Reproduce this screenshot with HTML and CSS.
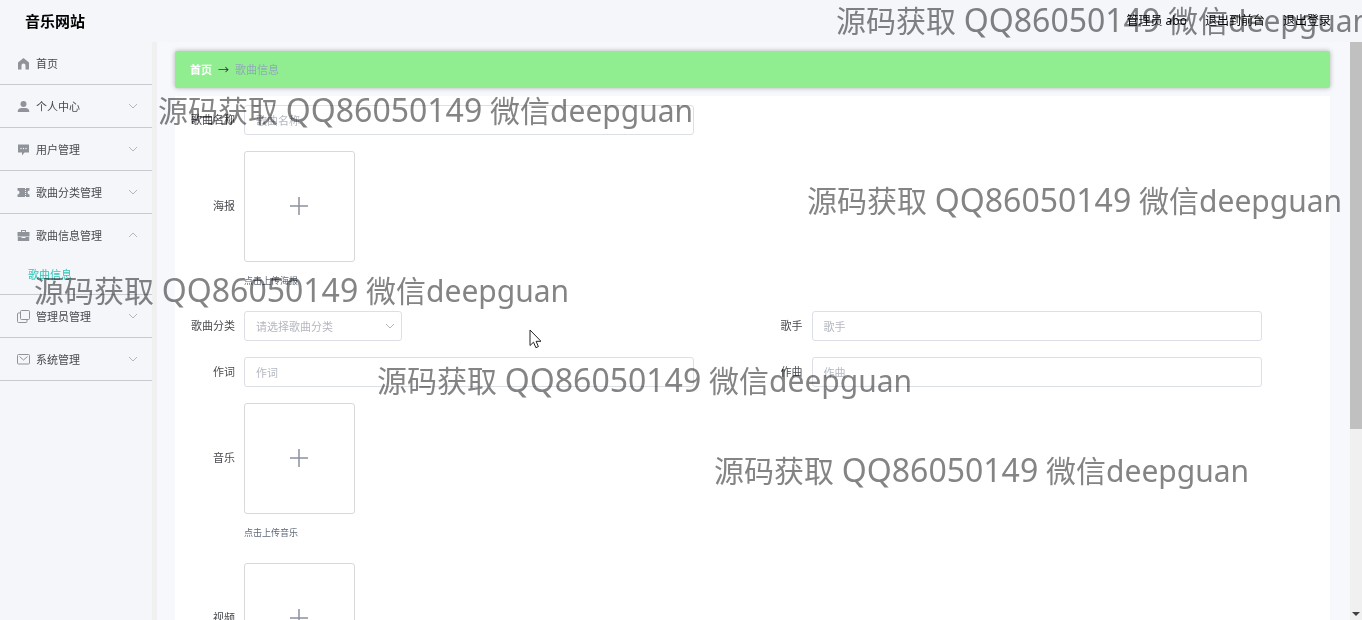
FILE: index.html
```html
<!DOCTYPE html>
<html lang="zh-CN">
<head>
  <meta charset="UTF-8">
  <meta name="viewport" content="width=device-width, initial-scale=1.0">
  <title>音乐网站</title>
  <link rel="stylesheet" href="styles.css">
</head>
<body>
  <header class="navbar">
    <h1>音乐网站</h1>
    <nav class="user-links">
      <span>管理员 abo</span>
      <a href="#">退出到前台</a>
      <a href="#">退出登录</a>
    </nav>
  </header>

  <div class="layout">
    <!-- Side menu -->
    <aside class="sidebar">
      <ul class="menu">
        <li>
          <a class="menu-item" href="#">
            <svg class="icon" viewBox="0 0 13 13"><path fill="currentColor" d="M6.500 1 12 5.500V12.500H8.500V8.500a2 2 0 0 0-4 0v4H1v-7z"/></svg>
            <span>首页</span>
          </a>
        </li>
        <li>
          <a class="menu-item" href="#">
            <svg class="icon" viewBox="0 0 13 13"><circle fill="currentColor" cx="6.500" cy="4" r="3"/><path fill="currentColor" d="M.7 12c0-3 1.500-4 4-4h3.600c2.500 0 4 1 4 4z"/></svg>
            <span>个人中心</span>
            <svg class="arrow" viewBox="0 0 10 10"><path d="M1 3l4 4 4-4"/></svg>
          </a>
        </li>
        <li>
          <a class="menu-item" href="#">
            <svg class="icon" viewBox="0 0 13 13"><path fill="currentColor" d="M1 1.500h11v8H7.500L5 12.500v-3H1z"/><g fill="#f5f7fa"><circle cx="4" cy="5.500" r=".7"/><circle cx="6.500" cy="5.500" r=".7"/><circle cx="9" cy="5.500" r=".7"/></g></svg>
            <span>用户管理</span>
            <svg class="arrow" viewBox="0 0 10 10"><path d="M1 3l4 4 4-4"/></svg>
          </a>
        </li>
        <li>
          <a class="menu-item" href="#">
            <svg class="icon" viewBox="0 0 13 13"><path fill="currentColor" d="M.5 2h12v2.500a2 2 0 0 0 0 4V11H.5V8.500a2 2 0 0 0 0-4z"/><path stroke="#f5f7fa" stroke-dasharray="1 1" d="M8.500 2v9"/></svg>
            <span>歌曲分类管理</span>
            <svg class="arrow" viewBox="0 0 10 10"><path d="M1 3l4 4 4-4"/></svg>
          </a>
        </li>
        <li>
          <a class="menu-item" href="#">
            <svg class="icon" viewBox="0 0 13 13"><path fill="currentColor" fill-rule="evenodd" d="M4 3V1h5v2h3.500v4.500H.5V3zM5 3h3V2H5zM.8 8h3.700v1h4V8h3.700v4H.8z"/></svg>
            <span>歌曲信息管理</span>
            <svg class="arrow" viewBox="0 0 10 10"><path d="M1 7l4-4 4 4"/></svg>
          </a>
          <a class="submenu-item" href="#">歌曲信息</a>
        </li>
        <li>
          <a class="menu-item" href="#">
            <svg class="icon" viewBox="0 0 13 13"><g fill="none" stroke="currentColor"><rect x="3.500" y=".5" width="9" height="9" rx="1"/><path d="M3.500 3H1.500a1 1 0 0 0-1 1v7.500a1 1 0 0 0 1 1H9a1 1 0 0 0 1-1v-2"/></g></svg>
            <span>管理员管理</span>
            <svg class="arrow" viewBox="0 0 10 10"><path d="M1 3l4 4 4-4"/></svg>
          </a>
        </li>
        <li>
          <a class="menu-item" href="#">
            <svg class="icon" viewBox="0 0 13 13"><g fill="none" stroke="currentColor"><rect x=".5" y="1.500" width="12" height="9.500" rx="1"/><path d="M2.500 3.500l4 3.500 4-3.500"/></g></svg>
            <span>系统管理</span>
            <svg class="arrow" viewBox="0 0 10 10"><path d="M1 3l4 4 4-4"/></svg>
          </a>
        </li>
      </ul>
    </aside>

    <main class="content">
      <div class="breadcrumb">
        <a href="#">首页</a>
        <span class="separator">→</span>
        <span class="current">歌曲信息</span>
      </div>

      <!-- Song form -->
      <form class="song-form">
        <div class="field wide">
          <label for="name">歌曲名称</label>
          <input type="text" id="name" placeholder="歌曲名称">
        </div>
        <div class="field wide">
          <label class="upload-label" for="poster">海报</label>
          <div class="upload">
            <button type="button" id="poster"><svg viewBox="0 0 18 18"><path d="M9 0v18M0 9h18"/></svg></button>
            <p>点击上传海报</p>
          </div>
        </div>
        <div class="field">
          <label for="category">歌曲分类</label>
          <div class="select">
            <select id="category">
              <option>请选择歌曲分类</option>
            </select>
            <svg class="arrow" viewBox="0 0 10 10"><path d="M1 3l4 4 4-4"/></svg>
          </div>
        </div>
        <div class="field">
          <label for="singer">歌手</label>
          <input type="text" id="singer" placeholder="歌手">
        </div>
        <div class="field">
          <label for="lyricist">作词</label>
          <input type="text" id="lyricist" placeholder="作词">
        </div>
        <div class="field">
          <label for="composer">作曲</label>
          <input type="text" id="composer" placeholder="作曲">
        </div>
        <div class="field wide">
          <label class="upload-label" for="music">音乐</label>
          <div class="upload">
            <button type="button" id="music"><svg viewBox="0 0 18 18"><path d="M9 0v18M0 9h18"/></svg></button>
            <p>点击上传音乐</p>
          </div>
        </div>
        <div class="field wide">
          <label class="upload-label" for="video">视频</label>
          <div class="upload">
            <button type="button" id="video"><svg viewBox="0 0 18 18"><path d="M9 0v18M0 9h18"/></svg></button>
          </div>
        </div>
      </form>
    </main>

    <div class="scrollbar">
      <div class="thumb"></div>
      <svg viewBox="0 0 12 12"><path d="M2 4h8L6 8z"/></svg>
    </div>
  </div>

  <!-- Watermarks -->
  <div class="watermark mark-1">源码获取 <span>QQ86050149</span> 微信deepguan</div>
  <div class="watermark mark-2">源码获取 <span>QQ86050149</span> 微信deepguan</div>
  <div class="watermark mark-3">源码获取 <span>QQ86050149</span> 微信deepguan</div>
  <div class="watermark mark-4">源码获取 <span>QQ86050149</span> 微信deepguan</div>
  <div class="watermark mark-5">源码获取 <span>QQ86050149</span> 微信deepguan</div>
  <div class="watermark mark-6">源码获取 <span>QQ86050149</span> 微信deepguan</div>

  <svg class="cursor" viewBox="0 0 12 20"><path d="M1 1v15.500l3.500-3.300 2.400 5.500 2.500-1.100-2.300-5.300H12z"/></svg>
</body>
</html>
```
FILE: styles.css
```css
* {
  box-sizing: border-box;
}
body {
  position: relative;
  display: flex;
  flex-direction: column;
  height: 100vh;
  margin: 0;
  overflow: hidden;
  background-color: #f4f6fa;
  color: #484a4f;
  font-family: "Noto Sans", "Noto Sans CJK SC", sans-serif;
  font-size: 11px;
}
a {
  color: inherit;
  text-decoration: none;
}
input, select, button {
  font-family: inherit;
  font-size: 11px;
}
.navbar {
  display: flex;
  flex: none;
  align-items: center;
  justify-content: space-between;
  height: 42px;
  padding: 0 31px 2px 25px;
  color: #000;
}
.navbar h1 {
  margin: 0;
  font-size: 15px;
}
.user-links {
  display: flex;
  gap: 18px;
  font-size: 12px;
}
.layout {
  display: flex;
  flex: 1;
  min-height: 0;
}

/* side menu */
.sidebar {
  flex: none;
  width: 157px;
  border-right: 5px solid #f0f0f1;
}
.menu {
  margin: 0;
  padding: 0;
  list-style: none;
}
.menu li {
  border-bottom: 1px solid #c8cad0;
}
.menu-item {
  display: flex;
  align-items: center;
  height: 42px;
  padding: 0 14px 0 17px;
}
.icon {
  width: 13px;
  height: 13px;
  margin-right: 6px;
  color: #909399;
}
.arrow {
  width: 10px;
  height: 10px;
  margin-left: auto;
  fill: none;
  stroke: #b4b6bc;
}
.submenu-item {
  display: block;
  padding-left: 28px;
  line-height: 38px;
  color: #2ec7b9;
}

/* page content */
.content {
  flex: 1;
  min-width: 0;
  padding: 9px 20px 0 18px;
  overflow: hidden;
  background-color: #f6f8fb;
}
.breadcrumb {
  display: flex;
  align-items: center;
  gap: 6px;
  height: 37px;
  padding: 0 15px 2px;
  border-radius: 2px;
  background-color: #90ee90;
  box-shadow: 0 0 5px rgba(0, 0, 0, 0.3);
}
.breadcrumb a {
  color: #fff;
  font-weight: bold;
}
.separator {
  color: #303133;
}
.current {
  color: #8fa9b8;
}
.song-form {
  display: grid;
  grid-template-columns: 1fr 1fr;
  row-gap: 16px;
  margin-top: 8px;
  padding: 9px 10px;
  background-color: #fff;
}
.field {
  display: flex;
}
.wide {
  grid-column: span 2;
}
.field label {
  flex: none;
  width: 59px;
  padding-right: 9px;
  line-height: 30px;
  text-align: right;
  white-space: nowrap;
}
.field .upload-label {
  line-height: 110px;
}
.field input, .select select {
  width: 450px;
  height: 30px;
  padding: 0 11px;
  border: 1px solid #dcdfe6;
  border-radius: 3px;
  background-color: #fff;
}
.field input::placeholder {
  color: #b4b8c0;
}
.select {
  position: relative;
}
.select select {
  width: 158px;
  color: #b4b8c0;
  appearance: none;
}
.select .arrow {
  position: absolute;
  top: 10px;
  right: 7px;
  pointer-events: none;
}
.upload {
  height: 144px;
}
.upload button {
  display: flex;
  align-items: center;
  justify-content: center;
  width: 111px;
  height: 111px;
  padding: 0 1px 1px 0;
  border: 1px solid #d9d9d9;
  border-radius: 3px;
  background-color: #fff;
}
.upload button svg {
  width: 18px;
  height: 18px;
  stroke: #8c939d;
  stroke-width: 1.500;
}
.upload p {
  margin: 8px 0 0;
  color: #606a7a;
  font-size: 9px;
  line-height: 22px;
}

/* scrollbar */
.scrollbar {
  display: flex;
  flex: none;
  flex-direction: column;
  justify-content: space-between;
  width: 12px;
  background-color: #f1f0f0;
}
.thumb {
  height: 67%;
  background-color: #c1c0c0;
}
.scrollbar svg {
  width: 12px;
  height: 12px;
  fill: #404040;
}

/* watermarks and pointer lie over the page */
.watermark {
  position: absolute;
  color: #848484;
  font-size: 30px;
  line-height: 40px;
  white-space: nowrap;
  mix-blend-mode: multiply;
  pointer-events: none;
}
.watermark span {
  font-size: 32px;
}
.mark-1 {
  top: 0;
  left: 836px;
}
.mark-2 {
  top: 90px;
  left: 158px;
}
.mark-3 {
  top: 180px;
  left: 807px;
}
.mark-4 {
  top: 270px;
  left: 34px;
}
.mark-5 {
  top: 360px;
  left: 377px;
}
.mark-6 {
  top: 450px;
  left: 714px;
}
.cursor {
  position: absolute;
  top: 329px;
  left: 529px;
  width: 12px;
  height: 20px;
  fill: #fff;
  stroke: #222;
}
```
